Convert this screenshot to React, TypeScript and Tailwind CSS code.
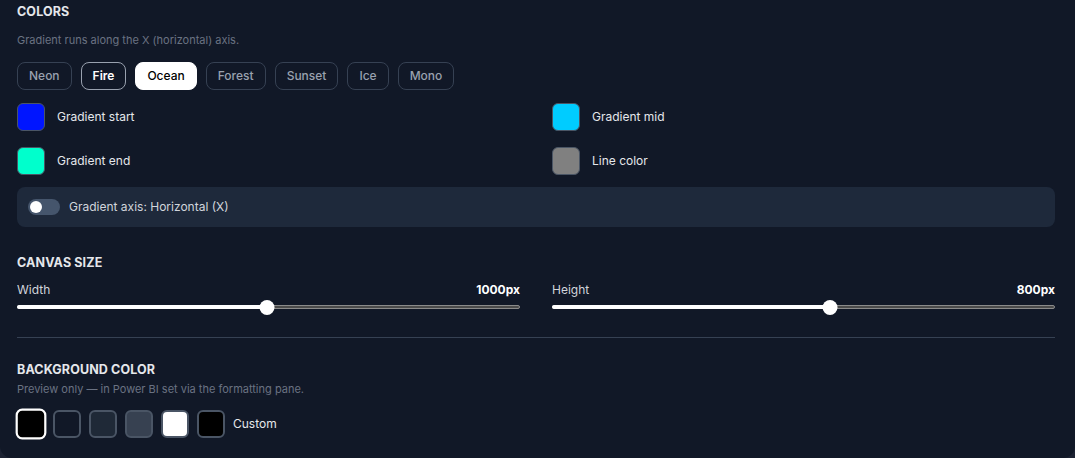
const presets = ['Neon', 'Fire', 'Ocean', 'Forest', 'Sunset', 'Ice', 'Mono'];

const gradientColors = [
  { label: 'Gradient start', color: '#0015ff' },
  { label: 'Gradient mid', color: '#00ccff' },
  { label: 'Gradient end', color: '#00ffcc' },
  { label: 'Line color', color: '#808080' },
];

const backgrounds = ['#000000', '#111827', '#1f2937', '#374151', '#ffffff', '#000000'];

function SectionTitle({ children }: { children: string }) {
  return (
    <p className="text-[12.5px] font-bold uppercase leading-4 tracking-[0.01em] text-gray-200">
      {children}
    </p>
  );
}

function Slider({ label, value, percent }: { label: string; value: string; percent: number }) {
  return (
    <div className="flex flex-col">
      <div className="flex items-center justify-between text-[12px] leading-4">
        <span className="text-gray-300">{label}</span>
        <span className="font-bold text-white">{value}</span>
      </div>

      <div className="relative mt-[1px] flex h-4 items-center">
        <div className="h-[4px] w-full rounded-full border border-[#8a8a8a] bg-[#4a4a4a]" />
        <div
          className="absolute left-0 h-[4px] rounded-full bg-white"
          style={{ width: `${percent}%` }}
        />
        <div
          className="absolute h-[15px] w-[15px] -translate-x-1/2 rounded-full bg-white"
          style={{ left: `${percent}%` }}
        />
      </div>
    </div>
  );
}

export default function App() {
  return (
    <div
      className="h-[458px] w-[1075px] overflow-hidden bg-[#1c2232]"
      style={{ fontFamily: 'Inter, "Noto Sans", sans-serif' }}
    >
      <div className="flex h-[458px] flex-col rounded-b-xl bg-[#111827] pl-[17px] pr-[20px] pt-[4px]">
        <SectionTitle>Colors</SectionTitle>

        <p className="mt-3 text-[11px] leading-4 text-gray-500">
          Gradient runs along the X (horizontal) axis.
        </p>

        <div className="mt-[14px] flex gap-[9px]">
          {presets.map((name) => (
            <button
              key={name}
              type="button"
              className={
                name === 'Ocean'
                  ? 'h-7 rounded-lg border border-white bg-white px-[11px] text-[12px] font-medium text-black'
                  : name === 'Fire'
                    ? 'h-7 rounded-lg border border-gray-400 px-[11px] text-[12px] font-semibold text-white'
                    : 'h-7 rounded-lg border border-gray-700 px-[11px] text-[12px] font-medium text-gray-400'
              }
            >
              {name}
            </button>
          ))}
        </div>

        <div className="mt-[13px] grid grid-cols-2 gap-x-8 gap-y-4">
          {gradientColors.map((item) => (
            <div key={item.label} className="flex items-center gap-3">
              <div
                className="h-7 w-7 rounded-md border border-gray-600"
                style={{ backgroundColor: item.color }}
              />
              <span className="text-[12px] text-gray-200">{item.label}</span>
            </div>
          ))}
        </div>

        <div className="mt-3 flex h-10 items-center gap-[9px] rounded-lg bg-[#1e293b] px-[11px]">
          <div className="flex h-4 w-8 items-center rounded-full bg-slate-600 px-[2px]">
            <div className="h-3 w-3 rounded-full bg-white" />
          </div>
          <span className="text-[12px] text-gray-300">Gradient axis: Horizontal (X)</span>
        </div>

        <div className="mt-7">
          <SectionTitle>Canvas size</SectionTitle>
        </div>

        <div className="mt-[11px] grid grid-cols-2 gap-x-8">
          <Slider label="Width" value="1000px" percent={49.8} />
          <Slider label="Height" value="800px" percent={55.3} />
        </div>

        <div className="mt-[22px] h-px bg-gray-700" />

        <div className="mt-6">
          <SectionTitle>Background color</SectionTitle>
        </div>

        <p className="mt-[3px] text-[11px] leading-4 text-gray-500">
          Preview only — in Power BI set via the formatting pane.
        </p>

        <div className="mt-[13px] flex items-center gap-2">
          {backgrounds.map((color, index) => (
            <div
              key={index}
              className={
                index === 0
                  ? 'h-7 w-7 scale-110 rounded-md border-2 border-white'
                  : 'h-7 w-7 rounded-md border-2 border-gray-600'
              }
              style={{ backgroundColor: color }}
            />
          ))}
          <span className="text-[12px] text-gray-200">Custom</span>
        </div>
      </div>
    </div>
  );
}
